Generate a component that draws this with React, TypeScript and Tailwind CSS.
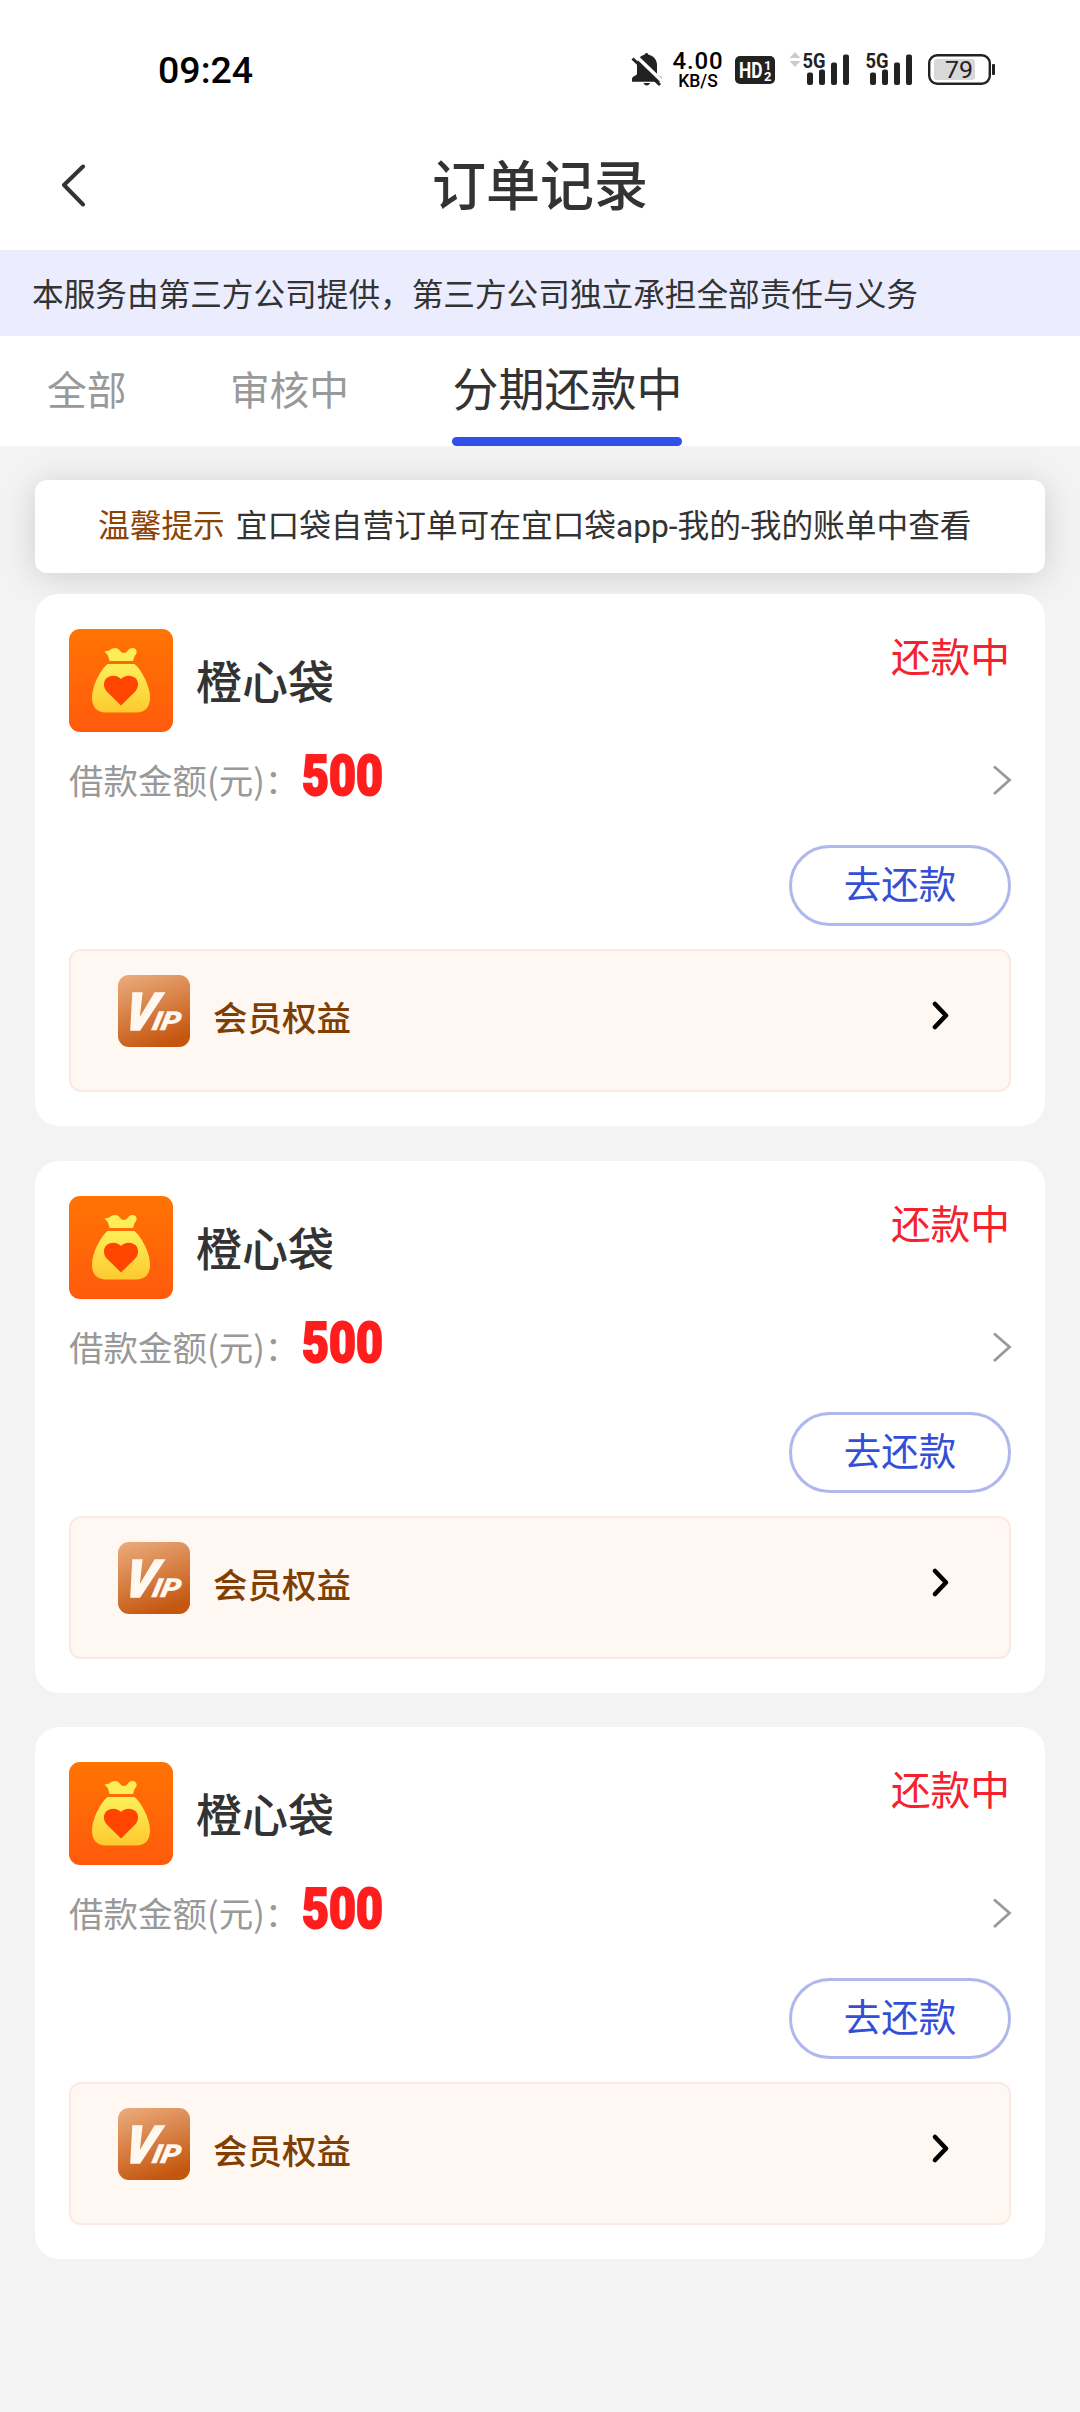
import { useState } from "react";

type Order = {
    id: number;
    name: string;
    status: string;
    amount: string;
}

const orders: Order[] = [
    { id: 1, name: "橙心袋", status: "还款中", amount: "500" },
    { id: 2, name: "橙心袋", status: "还款中", amount: "500" },
    { id: 3, name: "橙心袋", status: "还款中", amount: "500" },
];

const tabs = ["全部", "审核中", "分期还款中"];

const BellOffIcon = () => (
    <svg width="32" height="36" viewBox="0 0 32 36" fill="none">
        <path d="M15.500 1a2 2 0 0 1 2 1.800c5 1 8.500 5 8.500 10v9c0 1.800 5 2.500 5 5v3H1v-3c0-2.500 5-3.200 5-5v-9c0-5 3-9 7.500-10a2 2 0 0 1 2-1.800Z" fill="#222" />
        <path d="M12.500 31h6.500c-.5 1.500-1.700 2.500-3.200 2.500s-2.800-1-3.300-2.500Z" fill="#222" />
        <path d="M4.500 3.500 32 30" stroke="#fff" strokeWidth="3.600" />
        <path d="M1.500 6.500 29 33" stroke="#222" strokeWidth="3" />
    </svg>
);

const Signal = () => (
    <svg className="overflow-visible" width="48" height="34" viewBox="0 0 48 34">
        <text x="-0.500" y="15.500" textLength="23" lengthAdjust="spacingAndGlyphs" fontSize="20" fontWeight="700" fontFamily="Roboto, sans-serif" fill="#222">5G</text>
        <rect x="4" y="20.500" width="6" height="12.500" rx="2" fill="#222" />
        <rect x="16" y="17.500" width="6" height="15.500" rx="2" fill="#222" />
        <rect x="28" y="10.500" width="6" height="22.500" rx="2" fill="#222" />
        <rect x="40" y="2.500" width="6" height="30.500" rx="2" fill="#222" />
    </svg>
);

const Battery = () => (
    <svg width="68" height="32" viewBox="0 0 68 32">
        <rect x="1.200" y="1.200" width="60.600" height="28.600" rx="8" fill="#fff" stroke="#222" strokeWidth="2.400" />
        <rect x="6" y="5" width="41" height="21" rx="3" fill="#d8d8d8" />
        <rect x="64" y="10" width="3" height="11" rx="1" fill="#222" />
        <text x="17" y="23.500" textLength="28" lengthAdjust="spacingAndGlyphs" fontSize="24" fontFamily="Roboto, sans-serif" fill="#222">79</text>
    </svg>
);

const StatusBar = () => (
    <div className="flex h-[136px] items-start pt-[52px] pl-[158px] font-[Roboto,sans-serif]">
        <span className="w-[473px] text-[37.5px] leading-[36px] font-medium text-black">09:24</span>
        <BellOffIcon />
        <div className="ml-[9px] flex w-[52px] flex-col items-center font-medium text-black">
            <span className="h-[18px] text-[24px] leading-[18px] tracking-[0.9px]">4.00</span>
            <span className="mt-[3px] text-[17.5px] leading-[16px]">KB/S</span>
        </div>
        <svg className="mt-1 ml-[11px]" width="40" height="28" viewBox="0 0 40 28">
            <rect width="40" height="28" rx="5" fill="#222" />
            <text x="4" y="22" textLength="23.500" lengthAdjust="spacingAndGlyphs" fontSize="22" fontWeight="700" fontFamily="Roboto, sans-serif" fill="#fff">HD</text>
            <text x="29" y="13.500" fontSize="13" fontWeight="700" fontFamily="Roboto, sans-serif" fill="#fff">1</text>
            <text x="29" y="25" fontSize="13" fontWeight="700" fontFamily="Roboto, sans-serif" fill="#fff">2</text>
        </svg>
        <svg className="ml-3.5" width="12" height="16" viewBox="0 0 12 16">
            <path d="M6 0l5.500 6H.5ZM6 15l5.500-6H.5Z" fill="#ccc" />
        </svg>
        <div className="ml-0.5 flex gap-[15px]">
            <Signal />
            <Signal />
        </div>
        <div className="mt-0.5 ml-[14px]">
            <Battery />
        </div>
    </div>
);

const BagIcon = () => (
    <svg width="104" height="103" viewBox="0 0 104 103">
        <defs>
            <linearGradient id="bagBg" x1="0" y1="0" x2="0" y2="1">
                <stop offset="0" stopColor="#ff7403" />
                <stop offset="1" stopColor="#ff5a0c" />
            </linearGradient>
            <linearGradient id="bagGold" x1="0" y1="0" x2="0" y2="1">
                <stop offset="0" stopColor="#fdf05a" />
                <stop offset="1" stopColor="#fdc92f" />
            </linearGradient>
        </defs>
        <rect width="104" height="103" rx="11" fill="url(#bagBg)" />
        <path d="M40.500 32 39 26.500 35.500 22.500c1.500-.6 3.500-.2 5-1.200 2-1.500 3.500-2.300 6-2.300 4 0 4.500 5 8.500 5 3.500 0 4-5 8.500-5 2.500 0 4.200 1.500 4.200 3.700 0 2-1.400 2.800-2.200 4.600L64 32Z" fill="#fdee58" />
        <path d="M38.500 35h27c6.500 5.500 15.500 21 15.500 34 0 9-5 14.500-13.500 14.500h-31C28 83.500 23 78 23 69c0-13 9-28.500 15.500-34Z" fill="url(#bagGold)" />
        <path d="M52 76.500 37.800 62.500C34 58.500 34 52 38 48.800c4.500-3.500 11-2.500 14 1.200 3-3.700 9.500-4.700 14-1.200 4 3.200 4 9.700.2 13.700Z" fill="#ff4500" />
    </svg>
);

const VipIcon = () => (
    <svg className="overflow-visible" width="72" height="72" viewBox="0 0 72 72">
        <defs>
            <linearGradient id="vipBg" x1="0.200" y1="0" x2="0.550" y2="1">
                <stop offset="0" stopColor="#e9a878" />
                <stop offset="1" stopColor="#c4560f" />
            </linearGradient>
        </defs>
        <rect width="72" height="72" rx="11" fill="url(#vipBg)" />
        <g transform="translate(0 55)" fontFamily="Roboto, sans-serif" fontWeight="900" fontStyle="italic" fill="#fff8f0" stroke="#fff8f0">
            <text transform="skewX(-12)" x="4" y="0" textLength="31" lengthAdjust="spacingAndGlyphs" fontSize="52" strokeWidth="1.500">V</text>
            <text transform="skewX(-12)" x="33" y="0" textLength="28" lengthAdjust="spacingAndGlyphs" fontSize="26" strokeWidth="0.300">IP</text>
        </g>
    </svg>
);

const OrderCard = ({ name, status, amount }: Omit<Order, "id">) => (
    <div className="h-[532px] rounded-[24px] bg-white px-[34px] pt-[35px]">
        <div className="flex h-[103px]">
            <BagIcon />
            <h3 className="mt-[15px] ml-[23px] flex-1 text-[46px] leading-[70px] font-medium">{name}</h3>
            <span className="mr-px text-[39.7px] leading-[52px] text-[#f5222d]">{status}</span>
        </div>
        <div className="flex h-[113px] pt-[22px]">
            <span className="text-[34.5px] leading-[51px] text-[#999]">借款金额(元)：</span>
            <span className="ml-[3px] inline-block origin-left scale-x-[0.83] font-[Roboto,sans-serif] text-[56px] leading-[44px] font-black text-[#ff1d1d] [-webkit-text-stroke:2px_#ff1d1d]">{amount}</span>
            <svg className="-mr-px mt-[10px] ml-auto" width="20" height="32" viewBox="0 0 20 32" fill="none">
                <path d="M2 2.500 17.500 16 2 30" stroke="#999" strokeWidth="2.800" />
            </svg>
        </div>
        <button className="ml-auto block h-[81px] w-[222px] rounded-full border-[3px] border-[#afb8ec] pb-[7px] text-[37.5px] leading-[68px] text-[#344fd6]">去还款</button>
        <div className="mt-[23px] flex h-[143px] rounded-xl border-2 border-[#fbeae3] bg-[#fff7f1] pt-6 pr-[57px] pl-[47px]">
            <VipIcon />
            <span className="mt-[16px] ml-[23px] flex-1 text-[34.5px] leading-[51px] font-medium text-[#7f3f04]">会员权益</span>
            <svg className="mt-[24px]" width="22" height="32" viewBox="0 0 22 32" fill="none">
                <path d="M5 5 16 16.500 5 28" stroke="#000" strokeWidth="4.600" strokeLinecap="round" strokeLinejoin="round" />
            </svg>
        </div>
    </div>
);

const App = () => {
    const [active, setActive] = useState("分期还款中");

    return (
        <div className="h-[2412px] w-[1080px] overflow-hidden bg-[#f3f3f3] font-['Noto_Sans_CJK_SC',sans-serif] text-[#333]">
            <div className="h-[250px] bg-white">
                <StatusBar />
                <header className="grid grid-cols-[90px_1fr_90px] items-center">
                    <svg className="mt-1 ml-[60px]" width="28" height="44" viewBox="0 0 28 44" fill="none">
                        <path d="M23 3.500 4 22 23 41.500" stroke="#333" strokeWidth="4" strokeLinecap="round" strokeLinejoin="round" />
                    </svg>
                    <h1 className="text-center text-[54px] leading-[94px] font-medium">订单记录</h1>
                </header>
            </div>
            <p className="h-[86px] bg-[#ebedfe] pl-8 text-[31.65px] leading-[84px]">本服务由第三方公司提供，第三方公司独立承担全部责任与义务</p>

            <nav className="flex h-[110px] items-start gap-[103.5px] bg-white pl-[47px]">
                {tabs.map((tab) => (
                    <button
                        key={tab}
                        onClick={() => setActive(tab)}
                        className={tab === active
                            ? "relative h-[110px] pb-[10px] text-[46px] leading-[100px]"
                            : "text-[39.7px] leading-[104px] text-[#999]"}
                    >
                        {tab}
                        {tab === active && <span className="absolute bottom-0 left-0 h-[9px] w-full rounded-full bg-[#3150ea]" />}
                    </button>
                ))}
            </nav>

            <div className="mx-[35px] mt-[34px] flex h-[93px] gap-[11px] rounded-xl bg-white pl-[63px] font-[Roboto,'Noto_Sans_CJK_SC',sans-serif] text-[31.7px] leading-[93px] shadow-[0_4px_34px_rgba(0,0,0,0.15)]">
                <span className="text-[#8a4305]">温馨提示</span>
                <span>宜口袋自营订单可在宜口袋app-我的-我的账单中查看</span>
            </div>

            <div className="mx-[35px] mt-[21px] flex flex-col gap-[34.500px]">
                {orders.map(({ id, name, status, amount }) => (
                    <OrderCard key={id} name={name} status={status} amount={amount} />
                ))}
            </div>
        </div>
    );
}

export default App;
